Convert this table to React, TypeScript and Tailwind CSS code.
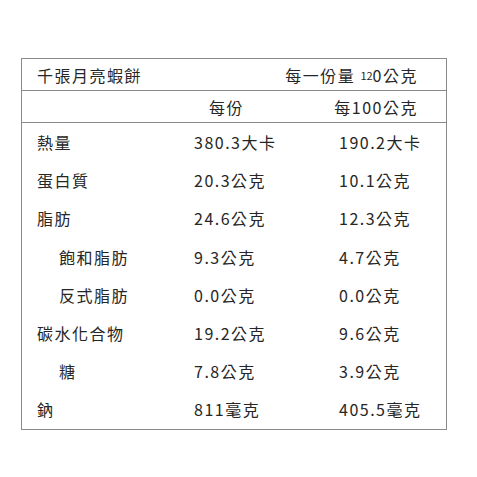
import React from "react";

const rows: { label: string; indent?: boolean; a: string; b: string }[] = [
  { label: "熱量", a: "380.3大卡", b: "190.2大卡" },
  { label: "蛋白質", a: "20.3公克", b: "10.1公克" },
  { label: "脂肪", a: "24.6公克", b: "12.3公克" },
  { label: "飽和脂肪", indent: true, a: "9.3公克", b: "4.7公克" },
  { label: "反式脂肪", indent: true, a: "0.0公克", b: "0.0公克" },
  { label: "碳水化合物", a: "19.2公克", b: "9.6公克" },
  { label: "糖", indent: true, a: "7.8公克", b: "3.9公克" },
  { label: "鈉", a: "811毫克", b: "405.5毫克" },
];

export default function App() {
  return (
    <div
      className="w-[477px] h-[477px] bg-white pt-[58px] pl-[21px] text-[#262626]"
      style={{ fontFamily: '"Noto Sans CJK TC", "Noto Sans", sans-serif' }}
    >
      <div className="w-[426px] border border-[#8a8a8a] text-[16px] tracking-[1.5px]">
        <div className="h-[32px] border-b border-[#8a8a8a] flex items-center justify-between pl-[15px] pr-[28px]">
          <span>千張月亮蝦餅</span>
          <span>
            每一份量 <span className="text-[11px] tracking-[0px] relative top-[-2px]">12</span>0公克
          </span>
        </div>
        <div className="h-[32px] border-b border-[#8a8a8a] flex items-center pl-[15px] pr-[28px]">
          <div className="w-[172px]" />
          <div className="w-[60px]">每份</div>
          <div className="flex-1 text-right">每100公克</div>
        </div>
        {rows.map((r) => (
          <div key={r.label} className="h-[38.2px] flex items-center pl-[15px]">
            <div className={`w-[157px] ${r.indent ? "pl-[22px]" : ""}`}>{r.label}</div>
            <div className="w-[145px]">{r.a}</div>
            <div className="flex-1">{r.b}</div>
          </div>
        ))}
      </div>
    </div>
  );
}
